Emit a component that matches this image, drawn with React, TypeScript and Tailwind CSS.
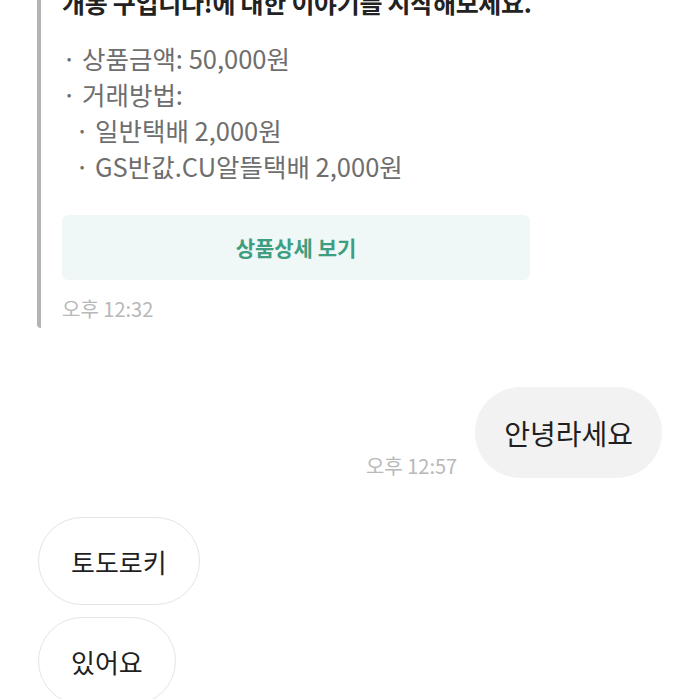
import React from "react";

const font = { fontFamily: '"Noto Sans CJK KR", "Noto Sans", sans-serif' };

export default function App() {
  return (
    <div className="w-[699px] h-[699px] overflow-hidden bg-white" style={font}>
      <div className="-mt-[16px]">
        <div className="ml-[37px] border-l-4 border-[#b3b3b3] rounded-bl-sm pl-[21px] pb-[7px] w-[493px] box-content">
          <div className="text-[25px] leading-[36px] font-bold text-[#222] whitespace-nowrap tracking-[-0.3px]">
            개봉 구입니다!에 대한 이야기를 시작해보세요.
          </div>
          <div className="mt-[20px] text-[25.5px] leading-[36px] text-[#6e6e6e] whitespace-nowrap">
            <div>· 상품금액: 50,000원</div>
            <div>· 거래방법:</div>
            <div className="pl-[13px]">· 일반택배 2,000원</div>
            <div className="pl-[13px]">· GS반값.CU알뜰택배 2,000원</div>
          </div>
          <div className="mt-[31px] h-[65px] w-[468px] rounded-md bg-[#f0f8f7] flex items-center justify-center text-[21px] font-bold text-[#3f9e80]">
            상품상세 보기
          </div>
          <div className="mt-[17px] text-[20px] leading-[24px] text-[#b8b8b8]">오후 12:32</div>
        </div>
      </div>

      <div className="mt-[59px] flex justify-end items-end pr-[37px] gap-[18px]">
        <div className="text-[20px] leading-[24px] text-[#b8b8b8]">오후 12:57</div>
        <div className="h-[91px] px-[29px] rounded-full bg-[#f2f2f2] flex items-center text-[28px] text-[#1f1f1f]">
          안녕라세요
        </div>
      </div>

      <div className="mt-[39px] pl-[38px] flex flex-col items-start gap-[12px]">
        <div className="h-[88px] px-[32px] rounded-full border border-[#e4e4e4] flex items-center text-[26px] text-[#1f1f1f]">
          토도로키
        </div>
        <div className="h-[88px] px-[32px] rounded-full border border-[#e4e4e4] flex items-center text-[26px] text-[#1f1f1f]">
          있어요
        </div>
      </div>
    </div>
  );
}
